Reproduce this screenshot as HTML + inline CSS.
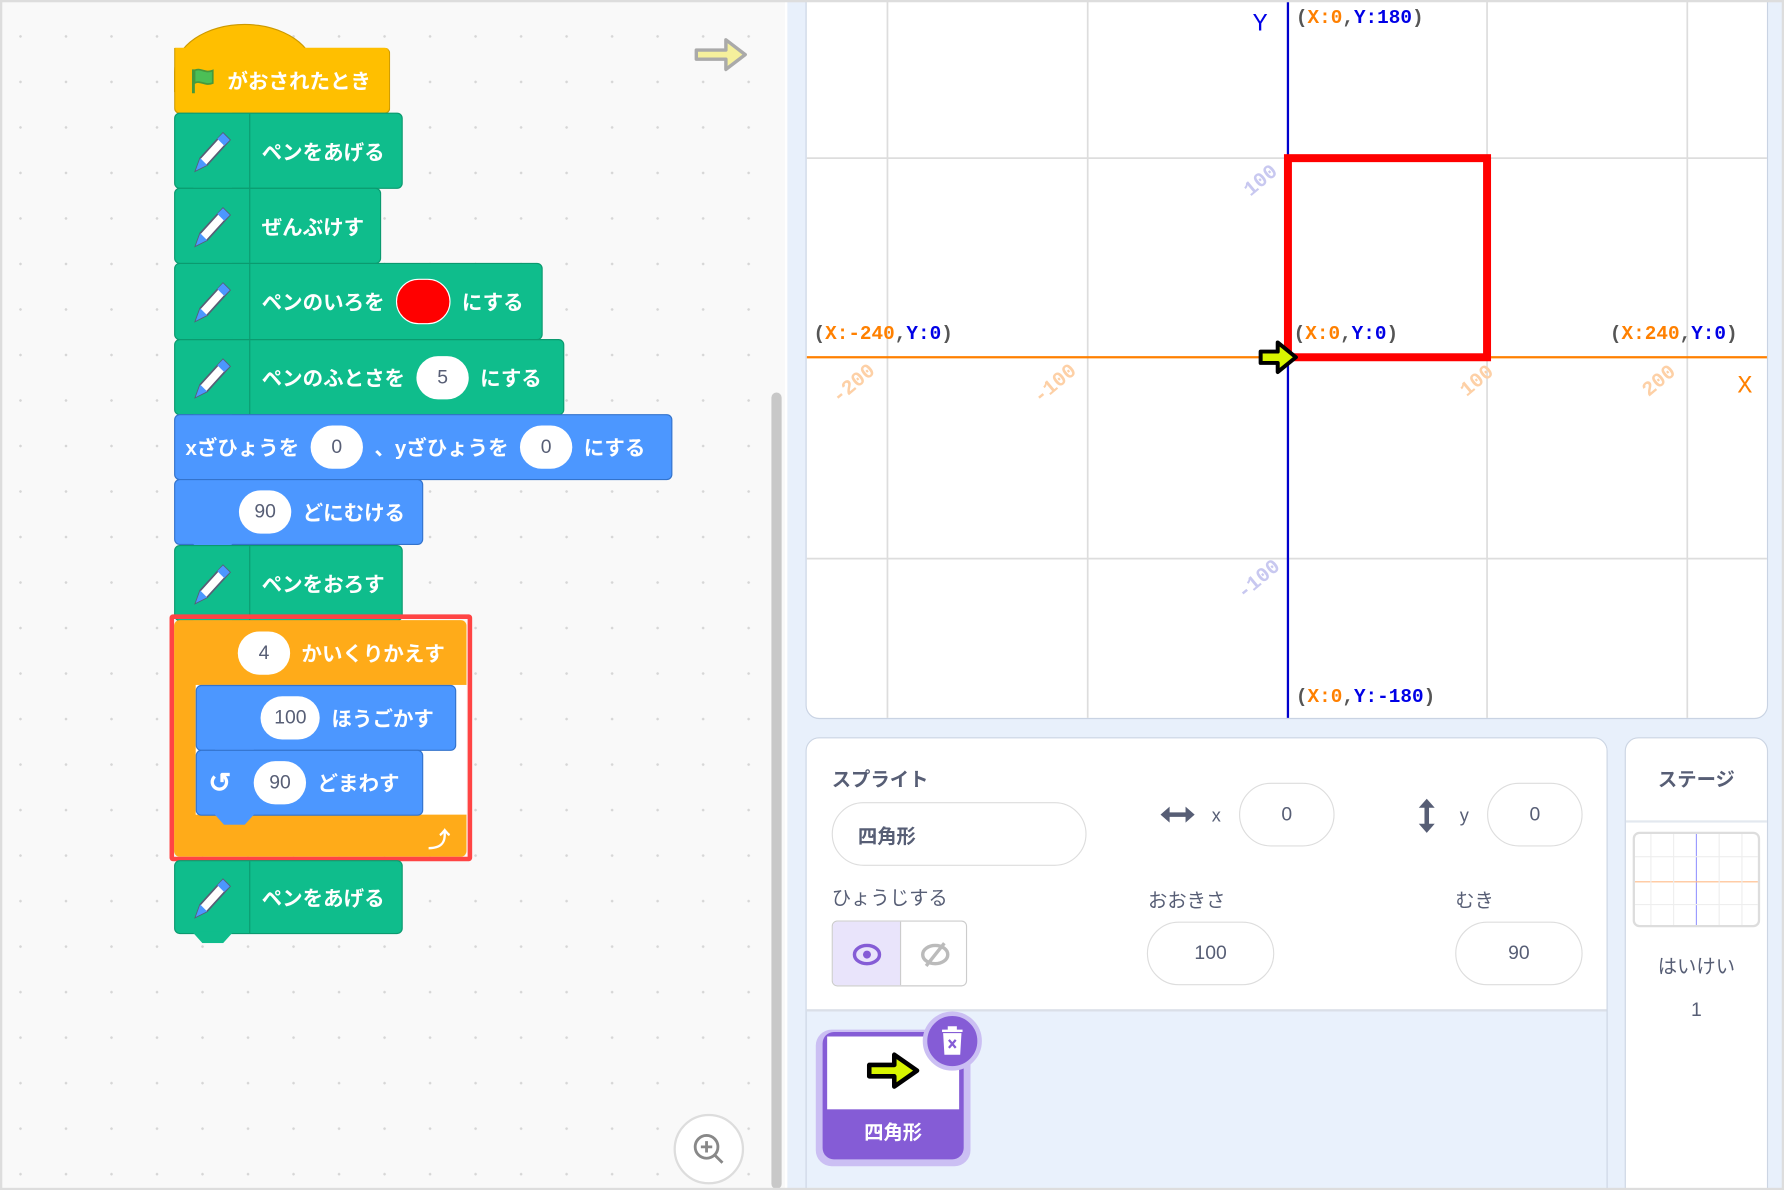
<!DOCTYPE html>
<html><head><meta charset="utf-8"><style>
*{margin:0;padding:0;box-sizing:border-box}
html,body{width:1784px;height:1190px;overflow:hidden;background:#fff}
#s{position:absolute;left:0;top:0;width:1568px;height:1046px;transform:scale(1.13776);transform-origin:0 0;font-family:"Liberation Sans","Noto Sans CJK JP",sans-serif;overflow:hidden}
.a{position:absolute}
#ws{left:0;top:0;width:690px;height:1046px;background-color:#f9f9f9;background-image:radial-gradient(circle,#d6d6d6 1px,transparent 1.3px);background-size:40px 40px;background-position:-2px 12px}
.b{position:absolute;color:#fff;font-weight:bold;font-size:18px;display:flex;align-items:center;border-radius:5px}
.g{background:#0fbd8c;border:1px solid #0b9a6f}
.bl{background:#4c97ff;border:1px solid #3373cc}
.pen{width:66px;height:100%;border-right:1px solid #0b9a6f;display:flex;align-items:center;justify-content:center;margin-right:10px}
.in{background:#fff;color:#575e75;border-radius:20px;height:38px;min-width:46px;padding:0 12px;display:inline-flex;align-items:center;justify-content:center;font-weight:normal;margin:0 10px;font-size:17px}
.notch{position:absolute;left:15px;bottom:-9px;width:36px;height:10px;background:inherit;clip-path:polygon(0 0,100% 0,75% 100%,25% 100%)}
#right{left:692px;top:0;width:876px;height:1046px;background:#e8f0fb}
.mono{font-family:"Liberation Mono",monospace;font-weight:bold;font-size:17px}
.o{color:#ff8000}.u{color:#0000e6}.k{color:#555}
.fld{position:absolute;border:1px solid #ddd;border-radius:28px;background:#fff;display:flex;align-items:center;justify-content:center;color:#575e75;font-size:17px}
.lbl{position:absolute;color:#575e75;font-size:17px}
</style></head><body><div id="s">
<div id="ws" class="a"></div>
<div class="a" style="left:678px;top:345px;width:9px;height:700px;background:#c8c8c8;border-radius:5px"></div>
<svg class="a" style="left:608px;top:30px" width="52" height="36" viewBox="0 0 52 36"><path d="M4 14h26V5l17 13-17 13v-9H4z" fill="#f5f09c" stroke="#aaa" stroke-width="3" stroke-linejoin="round"/></svg>
<div class="a" style="left:153px;top:21px;width:124px;height:60px;background:#ffbf00;border-radius:62px 62px 0 0 / 42px 42px 0 0;border:1px solid #cc9900"></div>
<div class="b" style="left:153px;top:42px;width:190px;height:58px;background:#ffbf00;border:1px solid #cc9900;border-top:none;border-radius:0 5px 5px 5px;padding-left:12px">
<svg width="26" height="26" viewBox="0 0 26 26"><path d="M4 3v21" stroke="#45993d" stroke-width="2.5"/><path d="M5 4c5-3 9 3 16 0v11c-7 3-11-3-16 0z" fill="#4cbf56" stroke="#45993d" stroke-width="1.5"/></svg><span style="margin-left:8px">がおされたとき</span><div class="notch"></div></div>
<div class="b g" style="left:153px;top:99px;width:201px;height:67px"><div class="pen"><svg width="44" height="44" viewBox="0 0 44 44"><path d="M7 39l4-11 20-22 6 6-20 22z" fill="#fff" stroke="#575e75" stroke-width="1.5"/><path d="M26 11l5-5 6 6-5 5z" fill="#4c97ff"/><path d="M7 39l4-11 6 6z" fill="#4c97ff"/></svg></div>ペンをあげる<div class="notch"></div></div>
<div class="b g" style="left:153px;top:165px;width:182px;height:67px"><div class="pen"><svg width="44" height="44" viewBox="0 0 44 44"><path d="M7 39l4-11 20-22 6 6-20 22z" fill="#fff" stroke="#575e75" stroke-width="1.5"/><path d="M26 11l5-5 6 6-5 5z" fill="#4c97ff"/><path d="M7 39l4-11 6 6z" fill="#4c97ff"/></svg></div>ぜんぶけす<div class="notch"></div></div>
<div class="b g" style="left:153px;top:231px;width:324px;height:68px"><div class="pen"><svg width="44" height="44" viewBox="0 0 44 44"><path d="M7 39l4-11 20-22 6 6-20 22z" fill="#fff" stroke="#575e75" stroke-width="1.5"/><path d="M26 11l5-5 6 6-5 5z" fill="#4c97ff"/><path d="M7 39l4-11 6 6z" fill="#4c97ff"/></svg></div>ペンのいろを<span style="display:inline-block;width:48px;height:40px;border-radius:20px;background:#f00;border:1px solid #fff;margin:0 10px"></span>にする<div class="notch"></div></div>
<div class="b g" style="left:153px;top:298px;width:343px;height:67px"><div class="pen"><svg width="44" height="44" viewBox="0 0 44 44"><path d="M7 39l4-11 20-22 6 6-20 22z" fill="#fff" stroke="#575e75" stroke-width="1.5"/><path d="M26 11l5-5 6 6-5 5z" fill="#4c97ff"/><path d="M7 39l4-11 6 6z" fill="#4c97ff"/></svg></div>ペンのふとさを<span class="in">5</span>にする<div class="notch"></div></div>
<div class="b bl" style="left:153px;top:364px;width:438px;height:58px;padding-left:9px">xざひょうを<span class="in">0</span>、yざひょうを<span class="in">0</span>にする<div class="notch"></div></div>
<div class="b bl" style="left:153px;top:421px;width:219px;height:58px;padding-left:46px"><span class="in" style="margin-left:10px">90</span>どにむける<div class="notch"></div></div>
<div class="b g" style="left:153px;top:479px;width:201px;height:67px"><div class="pen"><svg width="44" height="44" viewBox="0 0 44 44"><path d="M7 39l4-11 20-22 6 6-20 22z" fill="#fff" stroke="#575e75" stroke-width="1.5"/><path d="M26 11l5-5 6 6-5 5z" fill="#4c97ff"/><path d="M7 39l4-11 6 6z" fill="#4c97ff"/></svg></div>ペンをおろす<div class="notch"></div></div>
<div class="a" style="left:153px;top:545px;width:257px;height:208px;background:#ffab19;border-radius:5px"></div>
<div class="a" style="left:172px;top:602px;width:238px;height:114px;background:#fff"></div>
<div class="b" style="left:153px;top:545px;width:257px;height:57px;padding-left:46px"><span class="in" style="margin-left:10px">4</span>かいくりかえす</div>
<div class="b bl" style="left:172px;top:602px;width:229px;height:58px;padding-left:46px"><span class="in" style="margin-left:10px">100</span>ほうごかす<div class="notch"></div></div>
<div class="b bl" style="left:172px;top:659px;width:200px;height:58px;padding-left:10px"><span style="font-size:24px">↺</span><span class="in" style="margin-left:20px">90</span>どまわす<div class="notch"></div></div>
<div class="a" style="left:376px;top:722px;color:#fff;font-size:20px;font-weight:bold">⤴</div>
<div class="a" style="left:149px;top:540px;width:266px;height:217px;border:4px solid #f44;border-radius:3px"></div>
<div class="b g" style="left:153px;top:756px;width:201px;height:65px"><div class="pen"><svg width="44" height="44" viewBox="0 0 44 44"><path d="M7 39l4-11 20-22 6 6-20 22z" fill="#fff" stroke="#575e75" stroke-width="1.5"/><path d="M26 11l5-5 6 6-5 5z" fill="#4c97ff"/><path d="M7 39l4-11 6 6z" fill="#4c97ff"/></svg></div>ペンをあげる<div class="notch"></div></div>
<div class="a" style="left:592px;top:979px;width:62px;height:62px;border-radius:50%;background:#fff;border:2px solid #ddd"></div>
<svg class="a" style="left:606px;top:993px" width="34" height="34" viewBox="0 0 34 34"><circle cx="15" cy="15" r="10" fill="none" stroke="#888" stroke-width="2.5"/><path d="M22 22l7 7M10 15h10M15 10v10" stroke="#888" stroke-width="2.5"/></svg>
<div id="right" class="a"></div>
<div class="a" style="left:708px;top:-4px;width:846px;height:636px;background:#fff;border:1px solid #c9d3e3;border-radius:0 0 12px 12px;overflow:hidden">
<svg width="846" height="636" style="position:absolute;left:0;top:0">
<g stroke="#ddd" stroke-width="1.5"><path d="M71 0v636M247 0v636M598 0v636M774 0v636M0 142h846M0 494h846"/></g>
<path d="M0 317h846" stroke="#ff8000" stroke-width="2"/>
<path d="M423 0v636" stroke="#0000cc" stroke-width="2"/>
<rect x="423" y="142" width="175" height="175" fill="none" stroke="#f00" stroke-width="7"/>
<path d="M399 312h15v-8l16 13-16 13v-8h-15z" fill="#d8f500" stroke="#000" stroke-width="3.5" stroke-linejoin="round"/>
<text x="392" y="30" fill="#0000e6" font-size="22" font-family="Liberation Mono,monospace">Y</text>
<text x="818" y="348" fill="#ff8000" font-size="22" font-family="Liberation Mono,monospace">X</text>
<g font-family="Liberation Mono,monospace" font-size="18" font-weight="bold">
<text transform="translate(390 176) rotate(-40)" fill="#c8c8f0">100</text>
<text transform="translate(384 530) rotate(-40)" fill="#c8c8f0">-100</text>
<text transform="translate(28 358) rotate(-40)" fill="#fdd0a6">-200</text>
<text transform="translate(205 358) rotate(-40)" fill="#fdd0a6">-100</text>
<text transform="translate(580 352) rotate(-40)" fill="#fdd0a6">100</text>
<text transform="translate(740 352) rotate(-40)" fill="#fdd0a6">200</text>
</g>
</svg>
<div class="a mono" style="left:430px;top:10px"><span class="k">(</span><span class="o">X:0</span><span class="k">,</span><span class="u">Y:180</span><span class="k">)</span></div>
<div class="a mono" style="left:6px;top:288px"><span class="k">(</span><span class="o">X:-240</span><span class="k">,</span><span class="u">Y:0</span><span class="k">)</span></div>
<div class="a mono" style="left:428px;top:288px"><span class="k">(</span><span class="o">X:0</span><span class="k">,</span><span class="u">Y:0</span><span class="k">)</span></div>
<div class="a mono" style="left:706px;top:288px"><span class="k">(</span><span class="o">X:240</span><span class="k">,</span><span class="u">Y:0</span><span class="k">)</span></div>
<div class="a mono" style="left:430px;top:607px"><span class="k">(</span><span class="o">X:0</span><span class="k">,</span><span class="u">Y:-180</span><span class="k">)</span></div>
</div>
<div class="a" style="left:708px;top:648px;width:705px;height:400px;background:#e9f1fc;border:1px solid #ccd5e3;border-radius:12px 12px 0 0;overflow:hidden">
<div class="a" style="left:0;top:0;width:705px;height:240px;background:#fff;border-bottom:2px solid #dadfe8"></div>
<div class="lbl" style="left:22px;top:22px;font-weight:bold">スプライト</div>
<div class="fld" style="left:22px;top:56px;width:224px;height:56px;justify-content:flex-start;padding-left:22px;font-weight:bold">四角形</div>
<svg class="a" style="left:310px;top:58px" width="32" height="18" viewBox="0 0 32 18"><path d="M5 9h22" stroke="#575e75" stroke-width="4"/><path d="M1 9l8-7v14zM31 9l-8-7v14z" fill="#575e75"/></svg>
<div class="lbl" style="left:356px;top:60px;font-size:16px">x</div>
<div class="fld" style="left:380px;top:39px;width:84px;height:56px">0</div>
<svg class="a" style="left:536px;top:52px" width="18" height="32" viewBox="0 0 18 32"><path d="M9 5v22" stroke="#575e75" stroke-width="4"/><path d="M9 1l7 8H2zM9 31l7-8H2z" fill="#575e75"/></svg>
<div class="lbl" style="left:574px;top:60px;font-size:16px">y</div>
<div class="fld" style="left:598px;top:39px;width:84px;height:56px">0</div>
<div class="lbl" style="left:22px;top:126px">ひょうじする</div>
<div class="lbl" style="left:300px;top:128px">おおきさ</div>
<div class="lbl" style="left:570px;top:128px">むき</div>
<div class="a" style="left:22px;top:160px;width:119px;height:58px;border:1px solid #ccc;border-radius:5px;overflow:hidden;background:#fff"><div style="width:60px;height:100%;background:#e9e4fb;border-right:1px solid #ccc"></div>
<svg class="a" style="left:16px;top:16px" width="28" height="26" viewBox="0 0 28 26"><ellipse cx="14" cy="13" rx="11" ry="8" fill="none" stroke="#855cd6" stroke-width="3"/><circle cx="14" cy="13" r="3.5" fill="#855cd6"/></svg>
<svg class="a" style="left:76px;top:16px" width="28" height="26" viewBox="0 0 28 26"><ellipse cx="14" cy="13" rx="11" ry="8" fill="none" stroke="#bbb" stroke-width="3"/><path d="M6 23L22 3" stroke="#bbb" stroke-width="3"/></svg></div>
<div class="fld" style="left:299px;top:161px;width:112px;height:56px">100</div>
<div class="fld" style="left:570px;top:161px;width:112px;height:56px">90</div>
<div class="a" style="left:8px;top:256px;width:136px;height:120px;border-radius:14px;background:#cbbff3"></div>
<div class="a" style="left:14px;top:258px;width:124px;height:112px;border-radius:10px;background:#855cd6;overflow:hidden"><div style="position:absolute;left:4px;top:4px;width:116px;height:64px;background:#fff"></div>
<svg class="a" style="left:36px;top:14px" width="54" height="40" viewBox="0 0 54 40"><path d="M5 15h22V6l20 14-20 14v-9H5z" fill="#d8f500" stroke="#000" stroke-width="4" stroke-linejoin="round"/></svg>
<div class="a" style="left:0;top:74px;width:124px;text-align:center;color:#fff;font-weight:bold;font-size:17px">四角形</div></div>
<div class="a" style="left:102px;top:240px;width:52px;height:52px;border-radius:50%;background:#855cd6;border:4px solid #cbbff3"></div>
<svg class="a" style="left:116px;top:252px" width="24" height="28" viewBox="0 0 24 28"><path d="M3 5h18M9 5V2h6v3M5 8h14l-1 17H6z" fill="#fff" stroke="#fff" stroke-width="2"/><path d="M9 13l6 7M15 13l-6 7" stroke="#855cd6" stroke-width="2"/></svg>
</div>
<div class="a" style="left:1428px;top:648px;width:126px;height:400px;background:#fff;border:1px solid #ccd5e3;border-radius:12px 12px 0 0">
<div class="lbl" style="left:0;top:22px;width:124px;text-align:center;font-weight:bold">ステージ</div>
<div class="a" style="left:0;top:72px;width:124px;border-top:2px solid #e3e8ef"></div>
<div class="a" style="left:6px;top:82px;width:112px;height:84px;border:2px solid #ddd;border-radius:6px;background:#fff;overflow:hidden"><svg width="112" height="84"><path d="M54 0v84" stroke="#99f" stroke-width="1"/><path d="M0 42h112" stroke="#fb8" stroke-width="1"/><path d="M14 0v84M34 0v84M74 0v84M94 0v84M0 20h112M0 62h112" stroke="#eee"/></svg></div>
<div class="lbl" style="left:0;top:186px;width:124px;text-align:center">はいけい</div>
<div class="lbl" style="left:0;top:229px;width:124px;text-align:center">1</div>
</div>
<div class="a" style="left:0;top:0;width:1568px;height:1046px;border:2px solid #ddd;pointer-events:none"></div>
</div></body></html>
